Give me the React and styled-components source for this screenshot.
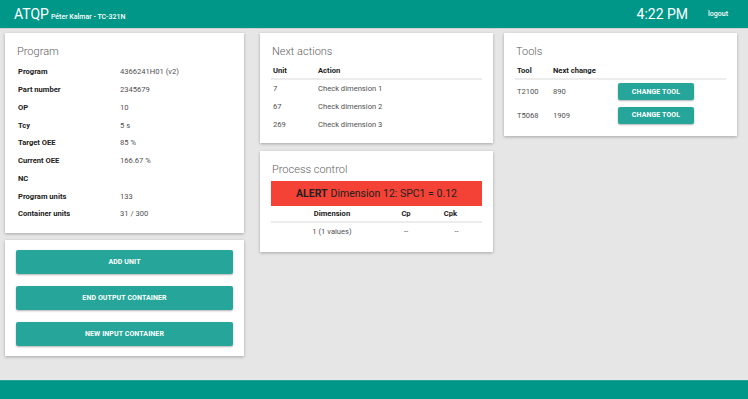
import React from 'react'
import styled, { createGlobalStyle } from 'styled-components'

const GlobalStyle = createGlobalStyle`
  html, body {
    margin: 0;
    padding: 0;
    background: #e6e6e6;
    font-family: Roboto, "Liberation Sans", sans-serif;
  }
  * { box-sizing: border-box; }
`

const Page = styled.div`
  min-height: 100vh;
  display: flex;
  flex-direction: column;
`

const Header = styled.header`
  height: 29px;
  background: #009688;
  color: #fff;
  display: flex;
  align-items: center;
  justify-content: space-between;
  padding: 0 20px 0 14px;
  border-bottom: 1px solid #d2d2d2;
`

const Brand = styled.div`
  display: flex;
  align-items: baseline;
  gap: 2px;
`

const BrandTitle = styled.span`
  font-size: 14px;
  font-weight: 400;
`

const BrandSub = styled.span`
  font-size: 7px;
  font-weight: 500;
`

const HeaderRight = styled.div`
  display: flex;
  align-items: center;
  gap: 20px;
`

const Clock = styled.span`
  font-size: 14px;
`

const Logout = styled.span`
  font-size: 7px;
  font-weight: 500;
`

const Main = styled.main`
  flex: 1;
  display: flex;
  align-items: flex-start;
  padding: 4px 5px;
`

const Column = styled.div`
  width: ${p => p.$width}px;
  margin-left: ${p => p.$offset || 0}px;
  display: flex;
  flex-direction: column;
  gap: ${p => p.$gap || 8}px;
`

const Card = styled.section`
  background: #fff;
  box-shadow: 0 1px 3px rgba(0, 0, 0, 0.28);
  padding: ${p => p.$top || 12}px 11px ${p => p.$bottom || 9}px;
`

const CardTitle = styled.h2`
  margin: 0 0 5px 1px;
  font-size: 11px;
  line-height: 13px;
  font-weight: 300;
  color: #616161;
`

const Table = styled.table`
  width: 100%;
  border-collapse: collapse;
  font-size: 7.6px;
  table-layout: fixed;
`

const Th = styled.th`
  height: 16px;
  padding: 0 2px;
  text-align: ${p => p.$align || 'left'};
  font-weight: 700;
  color: #212121;
  width: ${p => p.$w || 'auto'};
  border-bottom: 2px solid #ececec;
`

const Td = styled.td`
  height: ${p => p.$h || 18}px;
  padding: 0 2px;
  padding-left: ${p => p.$pl || 2}px;
  text-align: ${p => p.$align || 'left'};
  color: #505050;
  font-weight: 400;
`

const Label = styled.td`
  height: 17.75px;
  padding: 0 2px;
  width: 102px;
  font-weight: 700;
  color: #212121;
`

const ActionButton = styled.button`
  display: block;
  width: 100%;
  height: 24px;
  border: none;
  border-radius: 2px;
  background: #26a69a;
  color: #fff;
  font-family: Roboto, "Liberation Sans", sans-serif;
  font-size: 7px;
  font-weight: 700;
  letter-spacing: 0.1px;
  box-shadow: 0 1px 2px rgba(0, 0, 0, 0.3);
`

const ButtonStack = styled.div`
  display: flex;
  flex-direction: column;
  gap: 12px;
`

const SmallButton = styled(ActionButton)`
  width: 76px;
  height: 17px;
`

const Alert = styled.div`
  height: 25px;
  background: #f44336;
  color: #212121;
  font-size: 10.5px;
  display: flex;
  align-items: center;
  justify-content: center;
  gap: 3px;
  b { font-weight: 700; }
`

const Footer = styled.footer`
  height: 19px;
  background: #009688;
  border-top: 1px solid #26a69a;
`

const program = [
  ['Program', '4366241H01 (v2)'],
  ['Part number', '2345679'],
  ['OP', '10'],
  ['Tcy', '5 s'],
  ['Target OEE', '85 %'],
  ['Current OEE', '166.67 %'],
  ['NC', ''],
  ['Program units', '133'],
  ['Container units', '31 / 300'],
]

const actions = [
  ['7', 'Check dimension 1'],
  ['67', 'Check dimension 2'],
  ['269', 'Check dimension 3'],
]

const tools = [
  ['T2100', '890'],
  ['T5068', '1909'],
]

export default function App() {
  return (
    <Page>
      <GlobalStyle />
      <Header>
        <Brand>
          <BrandTitle>ATQP</BrandTitle>
          <BrandSub>Péter Kalmar - TC-321N</BrandSub>
        </Brand>
        <HeaderRight>
          <Clock>4:22 PM</Clock>
          <Logout>logout</Logout>
        </HeaderRight>
      </Header>

      <Main>
        <Column $width={239} $gap={7}>
          <Card $bottom={10}>
            <CardTitle>Program</CardTitle>
            <Table>
              <tbody>
                {program.map(([k, v]) => (
                  <tr key={k}>
                    <Label>{k}</Label>
                    <Td $h={17.75}>{v}</Td>
                  </tr>
                ))}
              </tbody>
            </Table>
          </Card>
          <Card $top={10} $bottom={10}>
            <ButtonStack>
              <ActionButton>ADD UNIT</ActionButton>
              <ActionButton>END OUTPUT CONTAINER</ActionButton>
              <ActionButton>NEW INPUT CONTAINER</ActionButton>
            </ButtonStack>
          </Card>
        </Column>

        <Column $width={233} $offset={16} $gap={8}>
          <Card $bottom={10}>
            <CardTitle>Next actions</CardTitle>
            <Table>
              <thead>
                <tr>
                  <Th $w="45px">Unit</Th>
                  <Th>Action</Th>
                </tr>
              </thead>
              <tbody>
                {actions.map(([u, a]) => (
                  <tr key={u}>
                    <Td>{u}</Td>
                    <Td>{a}</Td>
                  </tr>
                ))}
              </tbody>
            </Table>
          </Card>
          <Card $bottom={12}>
            <CardTitle>Process control</CardTitle>
            <Alert>
              <b>ALERT</b> Dimension 12: SPC1 = 0.12
            </Alert>
            <Table>
              <thead>
                <tr>
                  <Th $align="center" $w="122px">Dimension</Th>
                  <Th $align="center" $w="26px">Cp</Th>
                  <Th $align="center">Cpk</Th>
                </tr>
              </thead>
              <tbody>
                <tr>
                  <Td $align="center">1 (1 values)</Td>
                  <Td $align="center">--</Td>
                  <Td $align="center" $pl={14}>--</Td>
                </tr>
              </tbody>
            </Table>
          </Card>
        </Column>

        <Column $width={233} $offset={11}>
          <Card>
            <CardTitle>Tools</CardTitle>
            <Table>
              <thead>
                <tr>
                  <Th $w="36px">Tool</Th>
                  <Th $w="65px">Next change</Th>
                  <Th />
                </tr>
              </thead>
              <tbody>
                {tools.map(([t, n]) => (
                  <tr key={t}>
                    <Td $h={24}>{t}</Td>
                    <Td $h={24}>{n}</Td>
                    <Td $h={24}>
                      <SmallButton>CHANGE TOOL</SmallButton>
                    </Td>
                  </tr>
                ))}
              </tbody>
            </Table>
          </Card>
        </Column>
      </Main>

      <Footer />
    </Page>
  )
}
